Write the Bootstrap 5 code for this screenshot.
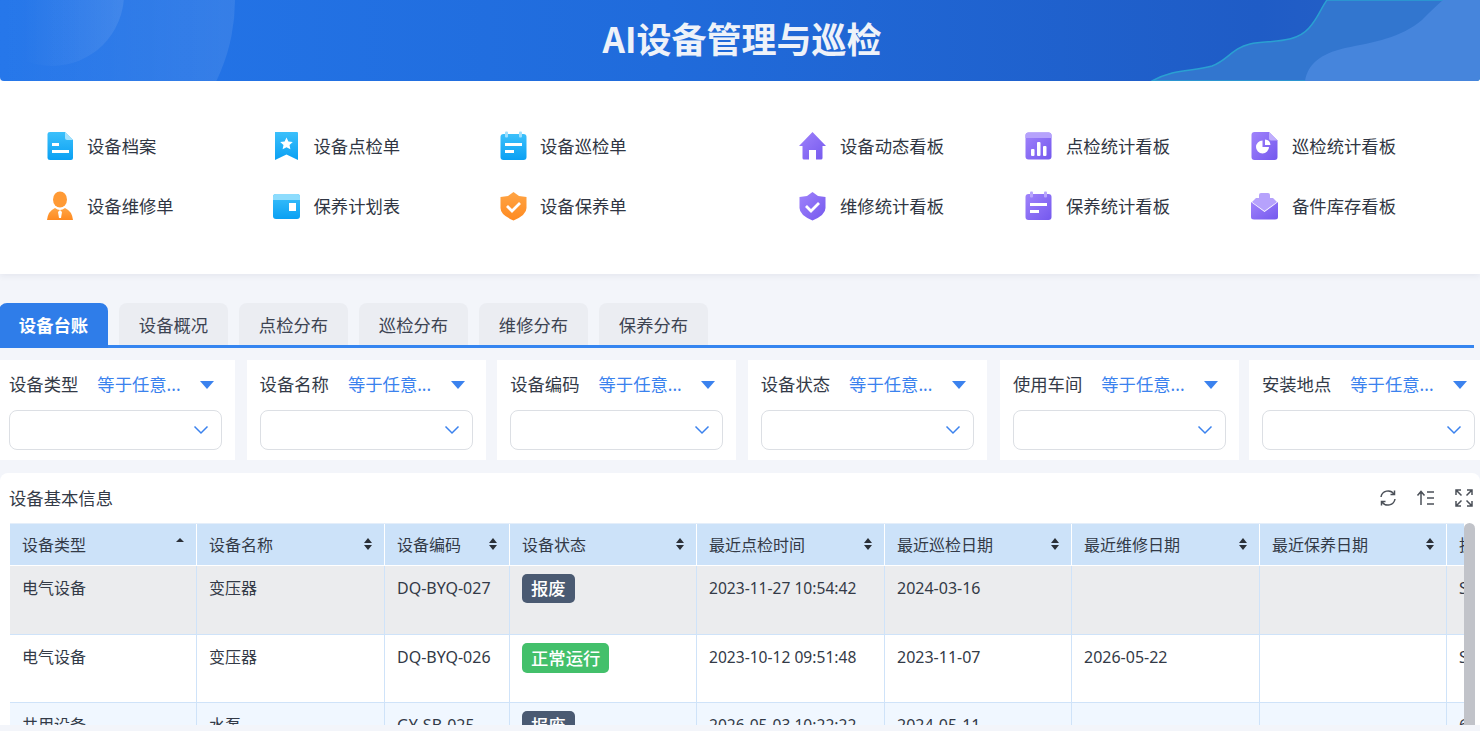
<!DOCTYPE html>
<html lang="zh-CN">
<head>
  <meta charset="UTF-8">
  <meta name="viewport" content="width=device-width, initial-scale=1.0">
  <title>AI设备管理与巡检</title>
  <link rel="stylesheet" href="https://cdn.jsdelivr.net/npm/bootstrap@5.3.0/dist/css/bootstrap.min.css">
  <style>
    html, body { height: 100%; overflow: hidden; }
    body {
      background: #f3f5fa;
      color: #333a47;
      font-family: "Noto Sans", "Noto Sans CJK SC", sans-serif;
      font-size: 16px;
      padding-bottom: 6px;
    }

    /* banner */
    .top-banner {
      position: relative;
      height: 81px;
      flex: none;
      overflow: hidden;
      border-radius: 0 0 4px 4px;
      background: linear-gradient(90deg, #2476ea 0%, #206bdb 45%, #1f5cc6 85%, #2a62c6 100%);
    }
    .top-banner svg { position: absolute; top: 0; left: 0; }
    .top-banner h1 {
      position: relative;
      margin: 0;
      line-height: 76px;
      font-size: 35px;
      font-weight: 700;
      color: #eef2f9;
      text-align: center;
      padding-left: 4px;
      font-family: "Noto Sans CJK SC", sans-serif;
    }

    /* shortcut panel */
    .quick-panel {
      flex: none;
      height: 193px;
      padding: 35px 0 0 46.5px;
      background: #fff;
      box-shadow: 0 2px 6px rgba(60, 70, 100, .08);
      gap: 73px;
    }
    .quick-grid { display: grid; grid-template-columns: repeat(3, 226.5px); grid-auto-rows: 60px; }
    .quick-grid + .quick-grid { grid-template-columns: repeat(3, 226px); }
    .quick-item { display: flex; align-items: center; gap: 12.5px; font-size: 17.33px; color: #303643; }
    .quick-grid + .quick-grid .quick-item { gap: 13px; }
    .quick-item span { padding-top: 2px; }
    .quick-item svg { width: 29px; height: 30px; flex: none; margin-left: -1px; }

    /* tabs */
    .tab-strip {
      flex: none;
      margin-top: 29px;
      margin-right: 6px;
      margin-left: -1px;
      height: 45px;
      gap: 11px;
      border-bottom: 3px solid #3585f0;
      align-items: flex-start;
    }
    .tab-strip .nav-link {
      width: 109px;
      height: 42px;
      padding: 0;
      border-radius: 8px 8px 0 0;
      background: #ebedf2;
      color: #3d4452;
      font-size: 17.33px;
      line-height: 44px;
      text-align: center;
    }
    .tab-strip .nav-link.active { height: 45px; background: #2f7de9; color: #fff; font-weight: 700; }

    /* filters */
    .filter-row { flex: none; margin: 12px 0 13px -4px; gap: 11.6px; width: 1500px; }
    .filter-box { width: 239px; height: 100px; padding: 13px 13px 0; background: #fff; flex: none; }
    .filter-box:nth-child(5) { margin-left: 1.6px; margin-right: -1.6px; }
    .filter-head { height: 24px; font-size: 17.33px; color: #333a47; }
    .filter-op { color: #3b82ee; margin-left: 19px; flex: 1; }
    .tri-down { width: 0; height: 0; border: 7px solid transparent; border-top: 8px solid #3b82ee; border-bottom: 0; margin-right: 8px; }
    .filter-input {
      height: 40px;
      margin-top: 13px;
      padding-right: 12px;
      border: 1px solid #dcdfe4;
      border-radius: 8px;
      background: #fff;
    }

    /* table card */
    .table-card {
      flex: 1 1 auto;
      min-height: 0;
      background: #fff;
      border-radius: 8px 8px 0 0;
      padding: 0 5px 0 10px;
      overflow: hidden;
    }
    .table-bar { flex: none; height: 50px; margin-left: -1px; margin-right: 1px; font-size: 17.33px; color: #333a47; }
    .table-bar > span { padding-top: 1px; }
    .tool-icons { gap: 18px; }
    .tool-icons svg { width: 20px; height: 20px; fill: none; stroke: #4b5058; stroke-width: 1.5; }
    .table-clip { flex: 1 1 auto; min-width: 0; overflow: hidden; border-top: 1px solid #e4eefa; }
    .asset-table {
      table-layout: fixed;
      width: 1690px;
      margin: 0 0 0 -1px;
      border-collapse: collapse;
      color: #333a47;
      --bs-table-bg: transparent;
    }
    .asset-table th, .asset-table td {
      padding: 10px 12px;
      border: 1px solid #cfe3f9;
      font-weight: 400;
      font-size: 16px;
      line-height: 24px;
      white-space: nowrap;
      overflow: hidden;
      vertical-align: top;
    }
    .asset-table th {
      height: 41px;
      padding: 9px 12px 8px;
      background: #cce2f9;
      border-color: #fff;
      border-top: 0;
      position: relative;
    }
    .asset-table td.stamp { font-size: 15.6px; }
    .asset-table tr.row-off td { background: #ebecee; height: 69px; }
    .asset-table tr.row-run td { background: #fff; height: 68px; }
    .asset-table tr.row-alt td { background: #f0f7ff; height: 68px; }
    .sort-mark {
      position: absolute;
      right: 12px;
      top: 13px;
      width: 8px;
      height: 14px;
    }
    .state-tag {
      display: inline-block;
      margin-top: -2px;
      padding: 0 9px;
      height: 29px;
      line-height: 29px;
      border-radius: 5px;
      color: #fff;
      font-size: 17.33px;
      font-weight: 500;
      vertical-align: top;
    }
    .state-scrap { background: #4a5a72; }
    .state-ok { background: #43c06b; height: 30px; line-height: 30px; }
    .scroll-thumb { width: 11px; flex: none; background: #c1c3c9; border-radius: 6px 6px 0 0; }
  </style>
</head>
<body class="d-flex flex-column">
  <svg width="0" height="0" class="position-absolute">
    <defs>
      <linearGradient id="gBlue" x1="0" y1="0" x2="0" y2="1"><stop offset="0" stop-color="#3cc0fb"/><stop offset="1" stop-color="#0aa0f3"/></linearGradient>
      <linearGradient id="gOrange" x1="0" y1="0" x2="0" y2="1"><stop offset="0" stop-color="#ffa545"/><stop offset="1" stop-color="#ff8a20"/></linearGradient>
      <linearGradient id="gPurple" x1="0" y1="0" x2="1" y2="1"><stop offset="0" stop-color="#a083fb"/><stop offset="1" stop-color="#7458ee"/></linearGradient>
      <linearGradient id="gFade" x1="0" y1="0" x2="1" y2="0"><stop offset=".3" stop-color="#fff" stop-opacity="0"/><stop offset="1" stop-color="#fff" stop-opacity=".09"/></linearGradient>
    </defs>
  </svg>

  <div class="top-banner">
    <svg width="1480" height="81" viewBox="0 0 1480 81">
      <circle cx="50" cy="0" r="185" fill="url(#gFade)"/>
      <circle cx="52" cy="-6" r="72" fill="url(#gFade)"/>
      <path d="M1152 81C1175 68 1192 72 1212 66C1228 60 1232 48 1250 44C1270 40 1295 44 1309 28C1318 18 1321 8 1327 0H1480V81Z" fill="#3276cf" stroke="#2aa0d2" stroke-width="1.500"/>
      <path d="M1305 81C1308 64 1320 54 1345 48C1375 42 1400 38 1422 20C1430 12 1436 6 1443 0H1480V81Z" fill="#4685dc"/>
    </svg>
    <h1>AI设备管理与巡检</h1>
  </div>

  <div class="quick-panel d-flex">
    <div class="quick-grid">
      <a class="quick-item text-decoration-none">
        <svg viewBox="0 0 29 30"><path d="M4 1H19L27 9V27Q27 29 25 29H4Q1.500 29 1.500 27V3Q1.500 1 4 1Z" fill="url(#gBlue)"/><path d="M19 1L27 9H21Q19 9 19 7Z" fill="#a5e2fd"/><rect x="6" y="12" width="7" height="3" fill="#fff"/><rect x="6" y="19" width="17" height="3" fill="#fff"/></svg>
        <span>设备档案</span>
      </a>
      <a class="quick-item text-decoration-none">
        <svg viewBox="0 0 29 30"><path d="M3 1H25Q26 1 26 2V29L14.500 23.500L3 29Z" fill="url(#gBlue)"/><path d="M14.500 6.500L16.400 10.500L20.800 11L17.500 14L18.400 18.300L14.500 16.200L10.600 18.300L11.500 14L8.200 11L12.600 10.500Z" fill="#fff"/></svg>
        <span>设备点检单</span>
      </a>
      <a class="quick-item text-decoration-none">
        <svg viewBox="0 0 29 30"><rect x="1.500" y="3" width="26" height="26" rx="3" fill="url(#gBlue)"/><rect x="6" y="0.500" width="3" height="6" rx="1" fill="#9fdffd"/><rect x="20" y="0.500" width="3" height="6" rx="1" fill="#9fdffd"/><rect x="6" y="12" width="17" height="3" fill="#fff"/><rect x="6" y="19" width="9" height="3" fill="#fff"/></svg>
        <span>设备巡检单</span>
      </a>
      <a class="quick-item text-decoration-none">
        <svg viewBox="0 0 29 30"><ellipse cx="14" cy="8.500" rx="7" ry="8" fill="#ff9a35"/><path d="M9 17Q2 20 1 29H27Q26 20 19 17Q14 21 9 17Z" fill="url(#gOrange)"/><path d="M14 19L16 21L15 27H13L12 21Z" fill="#fff"/></svg>
        <span>设备维修单</span>
      </a>
      <a class="quick-item text-decoration-none">
        <svg viewBox="0 0 29 30"><rect x="1" y="3" width="27" height="25" rx="3" fill="url(#gBlue)"/><path d="M1 9V6Q1 3 4 3H25Q28 3 28 6V9Z" fill="#8ddcfd"/><rect x="17" y="12" width="7" height="8" fill="#fff"/></svg>
        <span>保养计划表</span>
      </a>
      <a class="quick-item text-decoration-none">
        <svg viewBox="0 0 29 30"><path d="M14.500 1L20 5L27.500 6V17Q27.500 24 14.500 29.500Q1.500 24 1.500 17V6L9 5Z" fill="url(#gOrange)"/><path d="M8 15L13 20L21 12" fill="none" stroke="#fff" stroke-width="2.800"/></svg>
        <span>设备保养单</span>
      </a>
    </div>
    <div class="quick-grid">
      <a class="quick-item text-decoration-none">
        <svg viewBox="0 0 29 30"><path d="M14.500 1L28 15H24.500V27Q24.500 28.500 23 28.500H18V19H11V28.500H6Q4.500 28.500 4.500 27V15H1Z" fill="url(#gPurple)"/></svg>
        <span>设备动态看板</span>
      </a>
      <a class="quick-item text-decoration-none">
        <svg viewBox="0 0 29 30"><rect x="1.500" y="1.500" width="26" height="27" rx="3" fill="url(#gPurple)"/><path d="M1.500 7V4.500Q1.500 1.500 4.500 1.500H24.500Q27.500 1.500 27.500 4.500V7Z" fill="#b6a2fc"/><rect x="7" y="18" width="3.500" height="7" rx="1" fill="#fff"/><rect x="13" y="11" width="3.500" height="14" rx="1" fill="#fff"/><rect x="19" y="15" width="3.500" height="10" rx="1" fill="#fff"/></svg>
        <span>点检统计看板</span>
      </a>
      <a class="quick-item text-decoration-none">
        <svg viewBox="0 0 29 30"><path d="M4.500 1H19L27.500 9.500V26Q27.500 29 24.500 29H4.500Q1.500 29 1.500 26V4Q1.500 1 4.500 1Z" fill="url(#gPurple)"/><path d="M19 1L27.500 9.500H21Q19 9.500 19 7.500Z" fill="#c0aefd"/><path d="M12.500 9.500A6.500 6.500 0 1 0 19 16H12.500Z" fill="#fff"/><path d="M15 8.500A6 6 0 0 1 20.500 14H15Z" fill="#fff"/></svg>
        <span>巡检统计看板</span>
      </a>
      <a class="quick-item text-decoration-none">
        <svg viewBox="0 0 29 30"><path d="M14.500 1L20 5L27.500 6V17Q27.500 24 14.500 29.500Q1.500 24 1.500 17V6L9 5Z" fill="url(#gPurple)"/><path d="M8 15L13 20L21 12" fill="none" stroke="#fff" stroke-width="2.800"/></svg>
        <span>维修统计看板</span>
      </a>
      <a class="quick-item text-decoration-none">
        <svg viewBox="0 0 29 30"><rect x="1.500" y="3" width="26" height="26" rx="3" fill="url(#gPurple)"/><rect x="6" y="0.500" width="3" height="6" rx="1" fill="#b9a6fc"/><rect x="20" y="0.500" width="3" height="6" rx="1" fill="#b9a6fc"/><rect x="6" y="12" width="17" height="3" fill="#fff"/><rect x="6" y="19" width="9" height="3" fill="#fff"/></svg>
        <span>保养统计看板</span>
      </a>
      <a class="quick-item text-decoration-none">
        <svg viewBox="0 0 29 30"><path d="M11 2H18Q20 2 20 4V7H23L27 11L14.500 20L2 11L6 7H9V4Q9 2 11 2Z" fill="#b6a2fc"/><path d="M1 11L14.500 21L28 11V26Q28 28.500 25 28.500H4Q1 28.500 1 26Z" fill="url(#gPurple)"/></svg>
        <span>备件库存看板</span>
      </a>
    </div>
  </div>

  <ul class="nav tab-strip">
    <li class="nav-item"><a class="nav-link active">设备台账</a></li>
    <li class="nav-item"><a class="nav-link">设备概况</a></li>
    <li class="nav-item"><a class="nav-link">点检分布</a></li>
    <li class="nav-item"><a class="nav-link">巡检分布</a></li>
    <li class="nav-item"><a class="nav-link">维修分布</a></li>
    <li class="nav-item"><a class="nav-link">保养分布</a></li>
  </ul>

  <div class="filter-row d-flex" id="filters"></div>

  <div class="table-card d-flex flex-column">
    <div class="table-bar d-flex align-items-center justify-content-between">
      <span>设备基本信息</span>
      <div class="tool-icons d-flex">
        <svg viewBox="0 0 20 20"><path d="M3 9A7.200 7.200 0 0 1 16 6"/><path d="M17 11A7.200 7.200 0 0 1 4 14"/><path d="M16.500 2.500V6.500H12.500"/><path d="M3.500 17.500V13.500H7.500"/></svg>
        <svg viewBox="0 0 20 20"><path d="M5 17V4M1.500 7.500L5 3.500L8.500 7.500M11 4H18M11 10H18M11 16H18"/></svg>
        <svg viewBox="0 0 20 20"><path d="M2 7V2H7M2 2L7.500 7.500M13 2H18V7M18 2L12.500 7.500M2 13V18H7M2 18L7.500 12.500M13 18H18V13M18 18L12.500 12.500"/></svg>
      </div>
    </div>
    <div class="d-flex flex-grow-1" style="min-height:0">
      <div class="table-clip">
        <table class="table asset-table">
          <colgroup id="cols"></colgroup>
          <thead><tr id="headRow"></tr></thead>
          <tbody id="rows"></tbody>
        </table>
      </div>
      <div class="scroll-thumb"></div>
    </div>
  </div>

  <script src="https://cdn.jsdelivr.net/npm/bootstrap@5.3.0/dist/js/bootstrap.bundle.min.js"></script>
  <script>
    // filter boxes
    const filterNames = ["设备类型", "设备名称", "设备编码", "设备状态", "使用车间", "安装地点"];
    document.getElementById("filters").innerHTML = filterNames.map(name => `
      <div class="filter-box">
        <div class="filter-head d-flex align-items-center">
          <span>${name}</span><span class="filter-op">等于任意...</span><i class="tri-down"></i>
        </div>
        <div class="filter-input d-flex align-items-center justify-content-end">
          <svg width="16" height="10" viewBox="0 0 16 10"><path d="M1.500 1.500L8 8L14.500 1.500" fill="none" stroke="#3b82ee" stroke-width="1.500"/></svg>
        </div>
      </div>`).join("");

    // table
    const columns = ["设备类型", "设备名称", "设备编码", "设备状态", "最近点检时间", "最近巡检日期", "最近维修日期", "最近保养日期", "执行标准"];
    const widths = [187, 188, 125, 187, 188, 187, 188, 187, 253];
    const bothWays = '<svg class="sort-mark" viewBox="0 0 8 14"><path d="M4 1L8 6H0Z M0 8H8L4 13Z" fill="#2b3038"/></svg>';
    const upOnly = '<svg class="sort-mark" viewBox="0 0 8 14"><path d="M4 1L8 5H0Z" fill="#2b3038"/></svg>';
    document.getElementById("cols").innerHTML = widths.map(w => `<col style="width:${w}px">`).join("");
    document.getElementById("headRow").innerHTML = columns.map((c, i) =>
      `<th>${c}${i === 8 ? "" : (i === 0 ? upOnly : bothWays)}</th>`).join("");

    const data = [
      ["row-off", "电气设备", "变压器", "DQ-BYQ-027", ["报废", "state-scrap"], "2023-11-27 10:54:42", "2024-03-16", "", "", "SOP-01"],
      ["row-run", "电气设备", "变压器", "DQ-BYQ-026", ["正常运行", "state-ok"], "2023-10-12 09:51:48", "2023-11-07", "2026-05-22", "", "SOP-01"],
      ["row-alt", "共用设备", "水泵", "GY-SB-025", ["报废", "state-scrap"], "2026-05-03 10:22:22", "2024-05-11", "", "", "6"]
    ];
    document.getElementById("rows").innerHTML = data.map(r => `
      <tr class="${r[0]}">
        <td>${r[1]}</td><td>${r[2]}</td><td>${r[3]}</td>
        <td><span class="state-tag ${r[4][1]}">${r[4][0]}</span></td>
        <td class="stamp">${r[5]}</td><td>${r[6]}</td><td>${r[7]}</td><td>${r[8]}</td><td>${r[9]}</td>
      </tr>`).join("");
  </script>
</body>
</html>
